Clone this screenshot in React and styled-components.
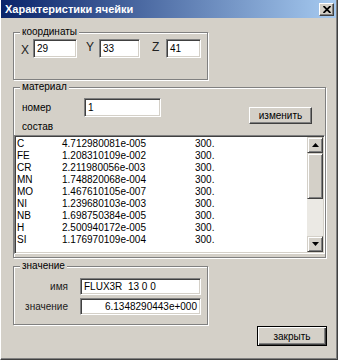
import React from 'react';
import styled, { createGlobalStyle } from 'styled-components';

const Global = createGlobalStyle`
  html, body { margin: 0; padding: 0; background: #d4d0c8; }
  body { font-family: "Liberation Sans", Arial, sans-serif; font-size: 10px; color: #000; }
  * { box-sizing: border-box; }
`;

const Window = styled.div`
  width: 338px;
  height: 360px;
  background: #d4d0c8;
  border-left: 1px solid #ffffff;
  border-right: 1px solid #404040;
  border-bottom: 1px solid #404040;
  box-shadow: inset -1px -1px 0 #808080;
  display: flex;
  flex-direction: column;
  overflow: hidden;
`;

const TitleBar = styled.div`
  height: 18px;
  margin-right: 1px;
  display: flex;
  align-items: center;
  justify-content: space-between;
  padding: 0 2px 0 4px;
  background: linear-gradient(to right, #0a246a, #a6caf0);
`;

const TitleText = styled.span`
  color: #fff;
  font-weight: bold;
  font-size: 11px;
  line-height: 13px;
`;

const CloseBox = styled.div`
  width: 15px;
  height: 13px;
  background: #d4d0c8;
  border-top: 1px solid #fff;
  border-left: 1px solid #fff;
  border-right: 1px solid #404040;
  border-bottom: 1px solid #404040;
  box-shadow: inset -1px -1px 0 #808080;
  display: flex;
  align-items: center;
  justify-content: center;
`;

const Body = styled.div`
  flex: 1;
  display: flex;
  flex-direction: column;
  padding: 14px 10px 0 12px;
`;

const Group = styled.div`
  position: relative;
  width: ${p => p.$w}px;
  height: ${p => p.$h}px;
  margin-top: ${p => p.$mt || 0}px;
  border: 1px solid #808080;
  box-shadow: 1px 1px 0 #fff, inset 1px 1px 0 #fff;
`;

const Legend = styled.span`
  position: absolute;
  top: -7px;
  left: 6px;
  padding: 0 2px;
  background: #d4d0c8;
  font-size: 10px;
  line-height: 12px;
`;

const CoordRow = styled.div`
  display: flex;
  align-items: flex-start;
  padding: 6px 0 0 7px;
`;

const CoordLabel = styled.span`
  width: ${p => p.$w}px;
  margin-left: ${p => p.$ml || 0}px;
  margin-top: ${p => p.$mt || 3}px;
  font-size: 12px;
  line-height: 14px;
  color: #222;
`;

const Input = styled.div`
  width: ${p => p.$w}px;
  height: ${p => p.$h || 19}px;
  background: #fff;
  border-top: 1px solid #808080;
  border-left: 1px solid #808080;
  border-right: 1px solid #fff;
  border-bottom: 1px solid #fff;
  box-shadow: inset 1px 1px 0 #404040, inset -1px -1px 0 #d4d0c8;
  display: flex;
  align-items: center;
  justify-content: ${p => (p.$right ? 'flex-end' : 'flex-start')};
  padding: 0 3px;
  font-size: 10px;
  white-space: pre;
`;

const MatTop = styled.div`
  display: grid;
  grid-template-columns: 62px 77px 1fr 63px;
  grid-template-rows: 19px 18px;
  padding: 10px 13px 0 8px;
`;

const MatLabel = styled.span`
  align-self: center;
  font-size: 10px;
  grid-row: ${p => p.$row};
`;

const Button = styled.div`
  width: ${p => p.$w}px;
  height: ${p => p.$h}px;
  background: #d4d0c8;
  display: flex;
  align-items: center;
  justify-content: center;
  font-size: 10px;
  border: 1px solid ${p => (p.$default ? '#000' : '#fff')};
  border-right-color: ${p => (p.$default ? '#000' : '#404040')};
  border-bottom-color: ${p => (p.$default ? '#000' : '#404040')};
  box-shadow: ${p =>
    p.$default
      ? 'inset 1px 1px 0 #fff, inset -1px -1px 0 #404040, inset -2px -2px 0 #808080'
      : 'inset -1px -1px 0 #808080'};
`;

const ChangeButton = styled(Button)`
  grid-column: 4;
  grid-row: 1 / 3;
  margin-top: 9px;
`;

const List = styled.div`
  height: 119px;
  display: flex;
  background: #fff;
  border-top: 1px solid #808080;
  border-left: 1px solid #808080;
  border-right: 1px solid #fff;
  border-bottom: 1px solid #fff;
  box-shadow: inset 1px 1px 0 #404040, inset -1px -1px 0 #d4d0c8;
  padding: 1px;
`;

const Rows = styled.div`
  flex: 1;
  overflow: hidden;
  padding: 1px 0 0 1px;
`;

const Row = styled.div`
  display: grid;
  grid-template-columns: 45px 133px 1fr;
  height: 12px;
  line-height: 12px;
  font-size: 10px;
  white-space: nowrap;
`;

const ScrollBar = styled.div`
  width: 16px;
  display: flex;
  flex-direction: column;
  background: #ebe9e4;
`;

const ScrollBtn = styled.div`
  width: 16px;
  height: ${p => p.$h || 16}px;
  background: #d4d0c8;
  border-top: 1px solid #d4d0c8;
  border-left: 1px solid #d4d0c8;
  border-right: 1px solid #404040;
  border-bottom: 1px solid #404040;
  box-shadow: inset 1px 1px 0 #fff, inset -1px -1px 0 #808080;
  display: flex;
  align-items: center;
  justify-content: center;
`;

const Spacer = styled.div`
  flex: 1;
`;

const ValueGrid = styled.div`
  display: grid;
  grid-template-columns: 54px 121px;
  grid-auto-rows: 17px;
  column-gap: 12px;
  row-gap: 3px;
  padding-top: 11px;
`;

const ValueLabel = styled.span`
  align-self: center;
  text-align: right;
  font-size: 10px;
  color: #1a1a1a;
`;

const Footer = styled.div`
  display: flex;
  justify-content: flex-end;
  margin-top: 1px;
`;

const Arrow = ({ up }) => (
  <svg width="7" height="4" viewBox="0 0 7 4">
    <polygon points={up ? '3.5,0 7,4 0,4' : '0,0 7,0 3.5,4'} fill="#000" />
  </svg>
);

const rows = [
  ['C', '4.712980081e-005'],
  ['FE', '1.208310109e-002'],
  ['CR', '2.211980056e-003'],
  ['MN', '1.748820068e-004'],
  ['MO', '1.467610105e-007'],
  ['NI', '1.239680103e-003'],
  ['NB', '1.698750384e-005'],
  ['H', '2.500940172e-005'],
  ['SI', '1.176970109e-004'],
];

export default function App() {
  return (
    <>
      <Global />
      <Window>
        <TitleBar>
          <TitleText>Характеристики ячейки</TitleText>
          <CloseBox>
            <svg width="8" height="7" viewBox="0 0 8 7">
              <path d="M0.5 0 L7.5 7 M7.5 0 L0.5 7" stroke="#000" strokeWidth="1.8" />
            </svg>
          </CloseBox>
        </TitleBar>
        <Body>
          <Group $w={195} $h={48}>
            <Legend>координаты</Legend>
            <CoordRow>
              <CoordLabel $w={12} $mt={4}>X</CoordLabel>
              <Input $w={44}>29</Input>
              <CoordLabel $w={13} $ml={9} $mt={1}>Y</CoordLabel>
              <Input $w={41}>33</Input>
              <CoordLabel $w={14} $ml={12} $mt={1}>Z</CoordLabel>
              <Input $w={35}>41</Input>
            </CoordRow>
          </Group>

          <Group $w={313} $h={171} $mt={7}>
            <Legend>материал</Legend>
            <MatTop>
              <MatLabel $row={1}>номер</MatLabel>
              <Input $w={77}>1</Input>
              <ChangeButton $w={63} $h={17}>изменить</ChangeButton>
              <MatLabel $row={2}>состав</MatLabel>
            </MatTop>
            <List>
              <Rows>
                {rows.map(([el, v]) => (
                  <Row key={el}>
                    <span>{el}</span>
                    <span>{v}</span>
                    <span>300.</span>
                  </Row>
                ))}
              </Rows>
              <ScrollBar>
                <ScrollBtn>
                  <Arrow up />
                </ScrollBtn>
                <ScrollBtn $h={46} />
                <Spacer />
                <ScrollBtn>
                  <Arrow />
                </ScrollBtn>
              </ScrollBar>
            </List>
          </Group>

          <Group $w={195} $h={59} $mt={8}>
            <Legend>значение</Legend>
            <ValueGrid>
              <ValueLabel>имя</ValueLabel>
              <Input $w={121} $h={17}>FLUX3R  13 0 0</Input>
              <ValueLabel>значение</ValueLabel>
              <Input $w={121} $h={17} $right>6.1348290443e+000</Input>
            </ValueGrid>
          </Group>

          <Footer>
            <Button $w={70} $h={20} $default>закрыть</Button>
          </Footer>
        </Body>
      </Window>
    </>
  );
}
